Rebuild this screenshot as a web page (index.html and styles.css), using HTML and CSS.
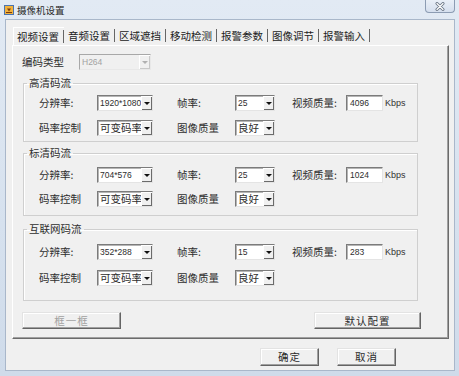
FILE: index.html
```html
<!DOCTYPE html>
<html lang="zh-CN">
<head>
<meta charset="utf-8" />
<link rel="stylesheet" href="styles.css">
</head>
<body>
<div class="window">
  <div class="titlebar">
    <svg class="app-icon" width="10" height="10" viewBox="0 0 10 10">
      <rect x="0.5" y="0.5" width="9" height="9" fill="#f2b23c" stroke="#4a74b0"/>
      <path d="M3 3.5h4L5 6.5z" fill="#7a3b0c"/>
      <rect x="2" y="7" width="6" height="1" fill="#7a3b0c"/>
    </svg>
    <span class="title">摄像机设置</span>
    <div class="close">
      <svg width="10" height="9" viewBox="0 0 10 9">
        <path d="M2 1.5l6 6M8 1.5l-6 6" stroke="#6b7686" stroke-width="3" stroke-linecap="round"/>
        <path d="M2 1.5l6 6M8 1.5l-6 6" stroke="#fff" stroke-width="1.2" stroke-linecap="round"/>
      </svg>
    </div>
  </div>

  <div class="client">
    <div class="tabs">
      <span class="tab active">视频设置</span>
      <span class="tab">音频设置</span>
      <span class="tab">区域遮挡</span>
      <span class="tab">移动检测</span>
      <span class="tab">报警参数</span>
      <span class="tab">图像调节</span>
      <span class="tab">报警输入</span>
    </div>

    <div class="panel">
      <div class="enc-row">
        <span class="label">编码类型</span>
        <div class="combo disabled w72"><span class="val latin">H264</span><span class="arrow"></span></div>
      </div>

      <!-- 高清码流 -->
      <fieldset class="group g1">
        <legend>高清码流</legend>
        <div class="row">
          <span class="label">分辨率:</span>
          <div class="combo w56"><span class="val latin">1920*1080</span><span class="arrow"></span></div>
          <span class="label">帧率:</span>
          <div class="combo w40"><span class="val latin">25</span><span class="arrow"></span></div>
          <span class="label">视频质量:</span>
          <div class="edit latin">4096</div>
          <span class="unit">Kbps</span>
        </div>
        <div class="row">
          <span class="label">码率控制</span>
          <div class="combo w56"><span class="val">可变码率</span><span class="arrow"></span></div>
          <span class="label">图像质量</span>
          <div class="combo w40"><span class="val">良好</span><span class="arrow"></span></div>
        </div>
      </fieldset>

      <!-- 标清码流 -->
      <fieldset class="group g2">
        <legend>标清码流</legend>
        <div class="row">
          <span class="label">分辨率:</span>
          <div class="combo w56"><span class="val latin">704*576</span><span class="arrow"></span></div>
          <span class="label">帧率:</span>
          <div class="combo w40"><span class="val latin">25</span><span class="arrow"></span></div>
          <span class="label">视频质量:</span>
          <div class="edit latin">1024</div>
          <span class="unit">Kbps</span>
        </div>
        <div class="row">
          <span class="label">码率控制</span>
          <div class="combo w56"><span class="val">可变码率</span><span class="arrow"></span></div>
          <span class="label">图像质量</span>
          <div class="combo w40"><span class="val">良好</span><span class="arrow"></span></div>
        </div>
      </fieldset>

      <!-- 互联网码流 -->
      <fieldset class="group g3">
        <legend>互联网码流</legend>
        <div class="row">
          <span class="label">分辨率:</span>
          <div class="combo w56"><span class="val latin">352*288</span><span class="arrow"></span></div>
          <span class="label">帧率:</span>
          <div class="combo w40"><span class="val latin">15</span><span class="arrow"></span></div>
          <span class="label">视频质量:</span>
          <div class="edit latin">283</div>
          <span class="unit">Kbps</span>
        </div>
        <div class="row">
          <span class="label">码率控制</span>
          <div class="combo w56"><span class="val">可变码率</span><span class="arrow"></span></div>
          <span class="label">图像质量</span>
          <div class="combo w40"><span class="val">良好</span><span class="arrow"></span></div>
        </div>
      </fieldset>

      <div class="panel-buttons">
        <button class="btn btn-frame" disabled>框一框</button>
        <button class="btn btn-default">默认配置</button>
      </div>
    </div>

    <div class="dialog-buttons">
      <button class="btn btn-dlg">确定</button>
      <button class="btn btn-dlg">取消</button>
    </div>
  </div>
</div>
</body>
</html>
```

FILE: styles.css
```css
*{
  margin:0;
  padding:0;
  box-sizing:border-box;
}
body{
  width:459px;
  height:376px;
  overflow:hidden;
  font-family:"Noto Sans CJK SC","Noto Sans",sans-serif;
  font-size:10.5px;
  color:#2e2e2e;
}
.window{
  width:459px;
  height:376px;
  display:flex;
  flex-direction:column;
  padding:0 4px 5px 5px;
  background:linear-gradient(#e2eaf4,#d6e1ee 60%,#cfdbea);
}

/* title bar */
.titlebar{
  height:19px;
  display:flex;
  align-items:center;
  margin-left:-1px;
}
.app-icon{
  margin:1px 3px 0 0;
}
.title{
  font-size:9.5px;
  color:#2a2a2a;
  line-height:12px;
}
.close{
  margin-left:auto;
  align-self:flex-start;
  width:30px;
  height:13px;
  border:1px solid #8c9cb3;
  border-top:none;
  border-radius:0 0 4px 4px;
  background:linear-gradient(#e9eff7,#d5dfee);
  display:flex;
  align-items:center;
  justify-content:center;
}

/* client area */
.client{
  flex:1;
  background:#f0f0f0;
  border:1px solid #a9b7ca;
  padding:7px 5px 4px 6px;
  display:flex;
  flex-direction:column;
}
.tabs{
  height:18px;
  display:flex;
  margin-left:1px;
}
.tab{
  position:relative;
  display:flex;
  align-items:center;
  width:51px;
  padding-left:4px;
  font-size:10.5px;
  line-height:12px;
  color:#222;
}
.tab::after{
  content:"";
  position:absolute;
  right:0;
  top:2px;
  width:1px;
  height:13px;
  background:#666;
}
.tab.active{
  border-top:1px solid #fff;
  border-left:1px solid #fff;
  padding-left:3px;
}

.panel{
  height:294px;
  border:1px solid;
  border-color:#fff #6b6b6b #6b6b6b #fff;
  box-shadow:inset -1px -1px #a0a0a0;
  padding:7px 0 9px 0;
  display:flex;
  flex-direction:column;
}
.enc-row{
  height:17px;
  display:flex;
  align-items:center;
  padding-left:9px;
}
.enc-row .label{
  width:57px;
}

.label{
  white-space:nowrap;
  line-height:12px;
}
.latin{
  font-family:"Liberation Sans",Arial,sans-serif;
  font-size:8.5px;
}
.unit{
  font-family:"Liberation Sans",Arial,sans-serif;
  font-size:9px;
  color:#333;
}

/* combo boxes */
.combo{
  height:16px;
  display:flex;
  align-items:stretch;
  background:#fff;
  border:1px solid;
  border-color:#7b7b7b #e4e4e4 #e4e4e4 #7b7b7b;
  box-shadow:inset 1px 1px #b5b5b5;
}
.combo .val{
  flex:1;
  display:flex;
  align-items:center;
  padding-left:2px;
  white-space:nowrap;
  overflow:hidden;
  line-height:12px;
}
.combo .arrow{
  width:11px;
  background:#f0f0f0;
  border-left:1px solid #fff;
  border-top:1px solid #fff;
  box-shadow:inset -1px -1px #6b6b6b;
  position:relative;
}
.combo .arrow::after{
  content:"";
  position:absolute;
  left:2px;
  top:5px;
  border-left:3px solid transparent;
  border-right:3px solid transparent;
  border-top:3px solid #111;
}
.combo.disabled{
  background:#f0f0f0;
  border-color:#a8a8a8 #e8e8e8 #e8e8e8 #a8a8a8;
  box-shadow:none;
  color:#a2a2a2;
}
.combo.disabled .arrow{
  box-shadow:inset -1px -1px #c8c8c8;
}
.combo.disabled .arrow::after{
  border-top-color:#b0b0b0;
}
.w72{ width:72px; }
.w56{ width:56px; }
.w40{ width:40px; }

.edit{
  width:37px;
  height:16px;
  background:#fff;
  border:1px solid;
  border-color:#7b7b7b #e4e4e4 #e4e4e4 #7b7b7b;
  box-shadow:inset 1px 1px #b5b5b5;
  padding-left:3px;
  line-height:14px;
}

/* group boxes */
.group{
  margin:0 30px 0 10px;
  border:1px solid #cfcfcf;
  box-shadow:inset 1px 1px #fff;
  padding:0;
  min-width:0;
}
.group legend{
  margin-left:3px;
  padding:0 2px;
  line-height:12px;
  font-size:10.5px;
}
.row{
  display:grid;
  grid-template-columns:58px 80px 58px 57px 54px 39px auto;
  align-items:center;
  height:16px;
  padding-left:15px;
}
.g1{ margin-top:7px; padding:6px 0 5px 0; }
.g1 .row + .row{ margin-top:9px; }
.g2{ margin-top:5px; padding:8px 0 8px 0; }
.g2 .row + .row{ margin-top:8px; }
.g3{ margin-top:7px; padding:9px 0 14px 0; }
.g3 .row + .row{ margin-top:10px; }

/* buttons */
.btn{
  font-family:"Noto Sans CJK SC","Noto Sans",sans-serif;
  font-size:10.5px;
  color:#2a2a2a;
  background:#f0f0f0;
  border:1px solid;
  border-color:#e3e3e3 #646464 #646464 #e3e3e3;
  box-shadow:inset -1px -1px #a0a0a0,inset 1px 1px #fff;
  letter-spacing:1px;
  line-height:12px;
}
.btn:disabled{
  color:#a0a0a0;
}
.panel-buttons{
  display:flex;
  justify-content:space-between;
  margin:11px 27px 0 9px;
}
.btn-frame{
  width:99px;
  height:17px;
}
.btn-default{
  width:107px;
  height:17px;
}
.dialog-buttons{
  display:flex;
  justify-content:flex-end;
  gap:18px;
  margin-top:9px;
  padding-right:53px;
}
.btn-dlg{
  width:59px;
  height:18px;
}
```
